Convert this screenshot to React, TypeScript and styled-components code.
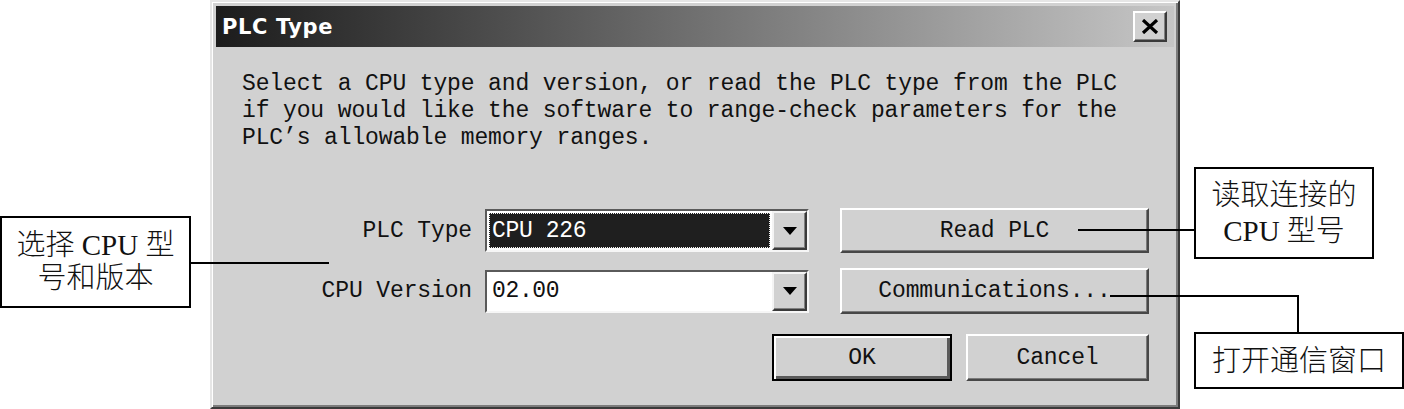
import React from "react";
import styled, { createGlobalStyle } from "styled-components";

const Global = createGlobalStyle`
  html, body { margin: 0; padding: 0; background: #fff; }
  body { width: 1404px; height: 409px; overflow: hidden; }
`;

const mono = `"Liberation Mono", "DejaVu Sans Mono", monospace`;
const cjk = `"Liberation Serif", "Noto Sans CJK SC", serif`;

const Page = styled.div`
  position: relative;
  display: flex;
  width: 1404px;
  height: 409px;
  overflow: hidden;
  background: #fff;
`;

const LeftColumn = styled.div`
  flex: none;
  width: 191px;
  margin-right: 19px;
  padding-top: 216px;
`;

const RightColumn = styled.div`
  flex: none;
  width: 210px;
  margin-left: 14px;
  padding-top: 167px;
  display: flex;
  flex-direction: column;
  align-items: flex-start;
`;

const Callout = styled.div<{ $w: number; $h: number; $lh: number; $mt?: number }>`
  box-sizing: border-box;
  width: ${(p) => p.$w}px;
  height: ${(p) => p.$h}px;
  margin-top: ${(p) => p.$mt ?? 0}px;
  border: 2px solid #000;
  background: #fff;
  display: flex;
  flex-direction: column;
  align-items: center;
  justify-content: center;
  font-family: ${cjk};
  font-size: 29px;
  font-weight: 300;
  line-height: ${(p) => p.$lh}px;
  color: #111;
  white-space: nowrap;
`;

const Dialog = styled.div`
  flex: none;
  box-sizing: border-box;
  width: 970px;
  height: 409px;
  padding: 4px;
  background: #d1d1d1;
  border: 2px solid;
  border-color: #e6e6e6 #3a3a3a #3a3a3a #e6e6e6;
  box-shadow: inset 1px 1px #ffffff, inset -2px -2px #7c7c7c;
  display: flex;
  flex-direction: column;
`;

const TitleBar = styled.div`
  flex: none;
  height: 41px;
  display: flex;
  align-items: center;
  justify-content: space-between;
  padding: 0 7px 0 6px;
  background: linear-gradient(to right, #1c1c1c 0%, #707070 50%, #c6c6c6 100%);
`;

const TitleText = styled.span`
  font-family: "DejaVu Sans", "Liberation Sans", sans-serif;
  font-weight: bold;
  font-size: 21px;
  letter-spacing: 0.6px;
  color: #fff;
  margin-top: 1px;
`;

const CloseButton = styled.div`
  box-sizing: border-box;
  width: 34px;
  height: 31px;
  background: #d1d1d1;
  border: 2px solid;
  border-color: #ffffff #3a3a3a #3a3a3a #ffffff;
  box-shadow: inset -1px -1px #808080;
  display: flex;
  align-items: center;
  justify-content: center;
`;

const Body = styled.div`
  flex: 1;
  padding: 24px 25px 0 26px;
  display: flex;
  flex-direction: column;
`;

const Message = styled.p`
  margin: 0;
  font-family: ${mono};
  font-size: 23px;
  line-height: 27px;
  letter-spacing: -0.13px;
  color: #111;
  white-space: pre;
`;

const Form = styled.div`
  margin-top: 56px;
  margin-left: 58px;
  display: flex;
  flex-direction: column;
`;

const Row = styled.div<{ $h: number; $mt: number }>`
  display: flex;
  align-items: center;
  height: ${(p) => p.$h}px;
  margin-top: ${(p) => p.$mt}px;
`;

const Label = styled.span`
  width: 172px;
  margin-right: 13px;
  text-align: right;
  font-family: ${mono};
  font-size: 23px;
  letter-spacing: -0.13px;
  color: #111;
  white-space: nowrap;
`;

const Combo = styled.div`
  box-sizing: border-box;
  width: 324px;
  height: 43px;
  margin-right: 31px;
  display: flex;
  border: 2px solid;
  border-color: #5a5a5a #f6f6f6 #f6f6f6 #5a5a5a;
  box-shadow: inset 1px 1px #2a2a2a;
`;

const Field = styled.div<{ $pad: number }>`
  flex: 1;
  display: flex;
  align-items: stretch;
  background: #fff;
  padding: ${(p) => p.$pad}px;
  font-family: ${mono};
  font-size: 23px;
  letter-spacing: -0.35px;
  color: #111;
`;

const FieldText = styled.span`
  display: flex;
  align-items: center;
  padding-left: 5px;
`;

const Highlight = styled.span`
  flex: 1;
  display: flex;
  align-items: center;
  padding-left: 2px;
  background: #1f1f1f;
  color: #fff;
  border: 1px dotted #f0f0f0;
`;

const DropButton = styled.div`
  flex: none;
  box-sizing: border-box;
  width: 35px;
  background: #d1d1d1;
  border: 2px solid;
  border-color: #f4f4f4 #3a3a3a #3a3a3a #f4f4f4;
  box-shadow: inset -1px -1px #808080;
  display: flex;
  align-items: center;
  justify-content: center;
`;

const Button = styled.div<{ $w: number; $h: number; $default?: boolean }>`
  box-sizing: border-box;
  width: ${(p) => p.$w}px;
  height: ${(p) => p.$h}px;
  display: flex;
  align-items: center;
  justify-content: center;
  background: #d1d1d1;
  border: 2px solid;
  border-color: ${(p) =>
    p.$default ? "#000 #000 #000 #000" : "#ffffff #474747 #474747 #ffffff"};
  box-shadow: ${(p) =>
    p.$default
      ? "inset 2px 2px #ffffff, inset -3px -3px #5a5a5a"
      : "inset -1px -1px #7a7a7a"};
  font-family: ${mono};
  font-size: 23px;
  letter-spacing: -0.13px;
  color: #111;
  white-space: nowrap;
`;

const ActionRow = styled.div`
  margin-top: 20px;
  display: flex;
  justify-content: flex-end;
  gap: 14px;
`;

const Overlay = styled.svg`
  position: absolute;
  left: 0;
  top: 0;
  width: 1404px;
  height: 409px;
  pointer-events: none;
`;

const Arrow = () => (
  <svg width="14" height="8" viewBox="0 0 14 8">
    <path d="M0 0H14L7 8Z" fill="#000" />
  </svg>
);

const CloseGlyph = () => (
  <svg width="18" height="15" viewBox="0 0 18 15">
    <path d="M2 1L16 14M16 1L2 14" stroke="#000" strokeWidth="3.2" />
  </svg>
);

export default function App() {
  return (
    <>
      <Global />
      <Page>
        <LeftColumn>
          <Callout $w={191} $h={92} $lh={33}>
            <span>选择 CPU 型</span>
            <span>号和版本</span>
          </Callout>
        </LeftColumn>

        <Dialog>
          <TitleBar>
            <TitleText>PLC Type</TitleText>
            <CloseButton>
              <CloseGlyph />
            </CloseButton>
          </TitleBar>
          <Body>
            <Message>
              {"Select a CPU type and version, or read the PLC type from the PLC\nif you would like the software to range-check parameters for the\nPLC\u2019s allowable memory ranges."}
            </Message>
            <Form>
              <Row $h={45} $mt={0}>
                <Label>PLC Type</Label>
                <Combo>
                  <Field $pad={2}>
                    <Highlight>CPU 226</Highlight>
                  </Field>
                  <DropButton>
                    <Arrow />
                  </DropButton>
                </Combo>
                <Button $w={309} $h={45}>Read PLC</Button>
              </Row>
              <Row $h={46} $mt={15}>
                <Label>CPU Version</Label>
                <Combo>
                  <Field $pad={0}>
                    <FieldText>02.00</FieldText>
                  </Field>
                  <DropButton>
                    <Arrow />
                  </DropButton>
                </Combo>
                <Button $w={309} $h={46}>Communications...</Button>
              </Row>
              <ActionRow>
                <Button $w={180} $h={47} $default>
                  OK
                </Button>
                <Button $w={183} $h={47}>Cancel</Button>
              </ActionRow>
            </Form>
          </Body>
        </Dialog>

        <RightColumn>
          <Callout $w={180} $h={92} $lh={36}>
            <span>读取连接的</span>
            <span>CPU 型号</span>
          </Callout>
          <Callout $w={210} $h={57} $lh={36} $mt={73}>
            <span>打开通信窗口</span>
          </Callout>
        </RightColumn>

        <Overlay viewBox="0 0 1404 409">
          <g stroke="#000" strokeWidth="2" fill="none" shapeRendering="crispEdges">
            <path d="M191 263H329" />
            <path d="M1078 230H1194" />
            <path d="M1110 296H1298V332" />
          </g>
        </Overlay>
      </Page>
    </>
  );
}
